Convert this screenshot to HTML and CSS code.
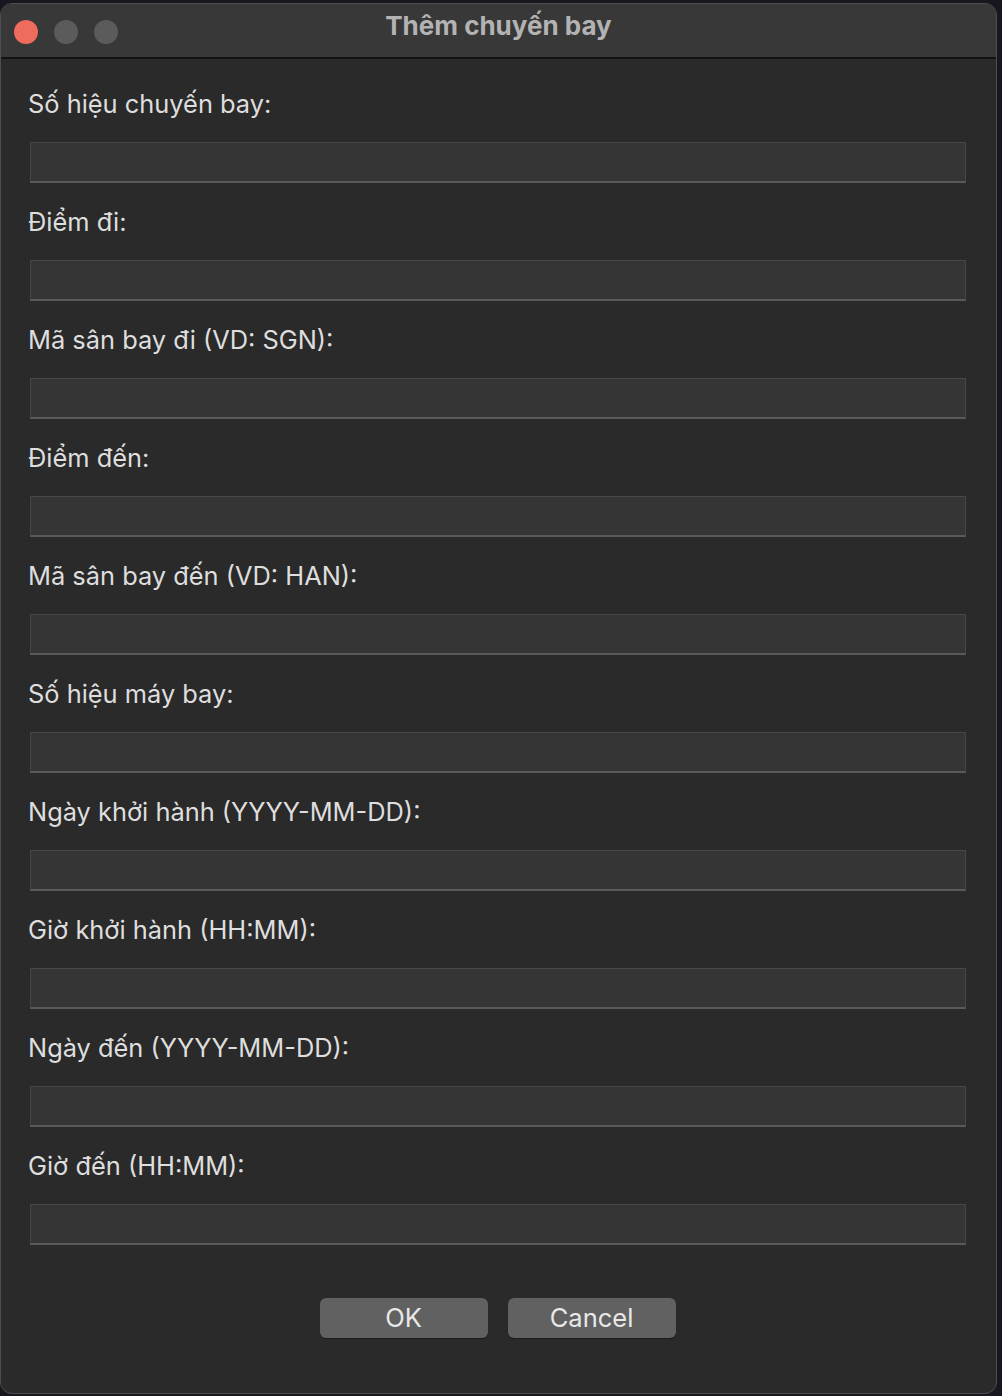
FILE: index.html
```html
<!DOCTYPE html>
<html lang="vi">
<head>
<meta charset="utf-8">
<title>Thêm chuyến bay</title>
<link rel="stylesheet" href="styles.css">
</head>
<body>
<div class="window">
  <div class="titlebar">
    <div class="lights">
      <span class="light close"></span>
      <span class="light"></span>
      <span class="light"></span>
    </div>
    <div class="title">Thêm chuyến bay</div>
  </div>
  <div class="content">
    <div class="field"><label>Số hiệu chuyến bay:</label><div class="input"></div></div>
    <div class="field"><label>Điểm đi:</label><div class="input"></div></div>
    <div class="field"><label>Mã sân bay đi (VD: SGN):</label><div class="input"></div></div>
    <div class="field"><label>Điểm đến:</label><div class="input"></div></div>
    <div class="field"><label>Mã sân bay đến (VD: HAN):</label><div class="input"></div></div>
    <div class="field"><label>Số hiệu máy bay:</label><div class="input"></div></div>
    <div class="field"><label>Ngày khởi hành (YYYY-MM-DD):</label><div class="input"></div></div>
    <div class="field"><label>Giờ khởi hành (HH:MM):</label><div class="input"></div></div>
    <div class="field"><label>Ngày đến (YYYY-MM-DD):</label><div class="input"></div></div>
    <div class="field"><label>Giờ đến (HH:MM):</label><div class="input"></div></div>
    <div class="buttons">
      <button class="btn">OK</button>
      <button class="btn">Cancel</button>
    </div>
  </div>
</div>
</body>
</html>
```
FILE: styles.css
```css
html, body {
  margin: 0;
  padding: 0;
  background: #17181f;
  width: 1002px;
  height: 1396px;
  overflow: hidden;
}
body {
  font-family: Inter, "Liberation Sans", sans-serif;
  padding-top: 3px;
  box-sizing: border-box;
}
.window {
  width: 997px;
  height: 1391px;
  box-sizing: border-box;
  background: #2a2a2a;
  border: 1px solid #4e4e4e;
  border-radius: 12px;
  overflow: hidden;
  display: flex;
  flex-direction: column;
}
.titlebar {
  height: 55px;
  flex: none;
  background: #383838;
  border-bottom: 2px solid #121212;
  box-sizing: border-box;
  display: flex;
  align-items: center;
  position: relative;
}
.lights {
  display: flex;
  gap: 16px;
  padding-left: 13px;
  padding-top: 2px;
}
.light {
  width: 24px;
  height: 24px;
  border-radius: 50%;
  background: #5b5b5b;
}
.light.close {
  background: #ef6b5e;
}
.title {
  position: absolute;
  left: 0;
  right: 0;
  top: 5px;
  text-align: center;
  font-size: 26px;
  font-weight: 700;
  color: #b3b3b3;
  line-height: 34px;
}
.content {
  padding: 29px 30px 0 27px;
  display: flex;
  flex-direction: column;
}
.field {
  display: flex;
  flex-direction: column;
}
.field label {
  font-size: 25.4px;
  line-height: 32px;
  color: #dedede;
  height: 32px;
}
.input {
  margin: 22px 0 23px 2px;
  height: 41px;
  box-sizing: border-box;
  background: #353535;
  border: 1px solid #474747;
  border-bottom: 2px solid #5a5a5a;
}
.buttons {
  display: flex;
  justify-content: center;
  gap: 20px;
  margin-top: 30px;
  padding-left: 1px;
}
.btn {
  width: 168px;
  height: 40px;
  border: none;
  border-radius: 6px;
  background: #616161;
  color: #e8e8e8;
  font-family: Inter, "Liberation Sans", sans-serif;
  font-size: 25.5px;
  line-height: 38px;
  padding: 0;
  box-shadow: 0 1px 1px rgba(0,0,0,0.3);
}
```
